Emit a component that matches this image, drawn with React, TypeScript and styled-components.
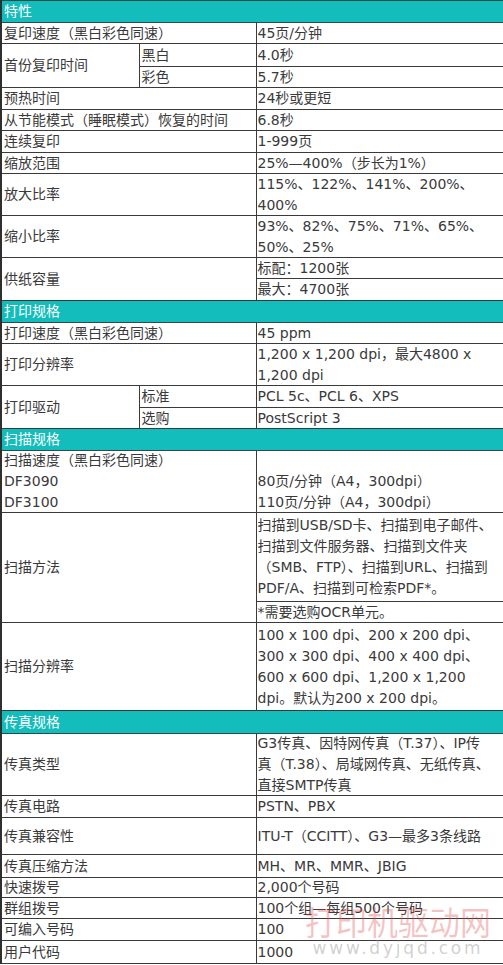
import React from 'react';
import styled, { createGlobalStyle } from 'styled-components';

const GlobalStyle = createGlobalStyle`
  html, body {
    margin: 0;
    padding: 0;
    background: #fff;
  }
  body {
    font-family: 'DejaVu Sans', 'Noto Sans CJK SC', sans-serif;
    font-size: 14px;
    color: #333;
  }
`;

type Sub = { sub?: string; value: string[]; h: number };
type Item = { label: string[]; rows: Sub[] };
type Section = { title: string; h: number; items: Item[] };

const specs: Section[] = [
  {
    title: '特性',
    h: 22,
    items: [
      { label: ['复印速度（黑白彩色同速）'], rows: [{ value: ['45页/分钟'], h: 21 }] },
      {
        label: ['首份复印时间'],
        rows: [
          { sub: '黑白', value: ['4.0秒'], h: 23 },
          { sub: '彩色', value: ['5.7秒'], h: 21 },
        ],
      },
      { label: ['预热时间'], rows: [{ value: ['24秒或更短'], h: 22 }] },
      { label: ['从节能模式（睡眠模式）恢复的时间'], rows: [{ value: ['6.8秒'], h: 21 }] },
      { label: ['连续复印'], rows: [{ value: ['1-999页'], h: 22 }] },
      { label: ['缩放范围'], rows: [{ value: ['25%—400%（步长为1%）'], h: 21 }] },
      { label: ['放大比率'], rows: [{ value: ['115%、122%、141%、200%、', '400%'], h: 42 }] },
      { label: ['缩小比率'], rows: [{ value: ['93%、82%、75%、71%、65%、', '50%、25%'], h: 42 }] },
      {
        label: ['供纸容量'],
        rows: [
          { value: ['标配：1200张'], h: 21 },
          { value: ['最大：4700张'], h: 22 },
        ],
      },
    ],
  },
  {
    title: '打印规格',
    h: 22,
    items: [
      { label: ['打印速度（黑白彩色同速）'], rows: [{ value: ['45 ppm'], h: 21 }] },
      { label: ['打印分辨率'], rows: [{ value: ['1,200 x 1,200 dpi，最大4800 x', '1,200 dpi'], h: 42 }] },
      {
        label: ['打印驱动'],
        rows: [
          { sub: '标准', value: ['PCL 5c、PCL 6、XPS'], h: 22 },
          { sub: '选购', value: ['PostScript 3'], h: 21 },
        ],
      },
    ],
  },
  {
    title: '扫描规格',
    h: 22,
    items: [
      {
        label: ['扫描速度（黑白彩色同速）', 'DF3090', 'DF3100'],
        rows: [{ value: ['\u00a0', '80页/分钟（A4，300dpi）', '110页/分钟（A4，300dpi）'], h: 62 }],
      },
      {
        label: ['扫描方法'],
        rows: [
          {
            value: [
              '扫描到USB/SD卡、扫描到电子邮件、',
              '扫描到文件服务器、扫描到文件夹',
              '（SMB、FTP）、扫描到URL、扫描到',
              'PDF/A、扫描到可检索PDF*。',
            ],
            h: 89,
          },
          { value: ['*需要选购OCR单元。'], h: 21 },
        ],
      },
      {
        label: ['扫描分辨率'],
        rows: [
          {
            value: [
              '100 x 100 dpi、200 x 200 dpi、',
              '300 x 300 dpi、400 x 400 dpi、',
              '600 x 600 dpi、1,200 x 1,200',
              'dpi。默认为200 x 200 dpi。',
            ],
            h: 88,
          },
        ],
      },
    ],
  },
  {
    title: '传真规格',
    h: 23,
    items: [
      {
        label: ['传真类型'],
        rows: [
          {
            value: ['G3传真、因特网传真（T.37）、IP传', '真（T.38）、局域网传真、无纸传真、', '直接SMTP传真'],
            h: 62,
          },
        ],
      },
      { label: ['传真电路'], rows: [{ value: ['PSTN、PBX'], h: 22 }] },
      { label: ['传真兼容性'], rows: [{ value: ['ITU-T（CCITT）、G3—最多3条线路'], h: 37 }] },
      { label: ['传真压缩方法'], rows: [{ value: ['MH、MR、MMR、JBIG'], h: 23 }] },
      { label: ['快速拨号'], rows: [{ value: ['2,000个号码'], h: 20 }] },
      { label: ['群组拨号'], rows: [{ value: ['100个组—每组500个号码'], h: 21 }] },
      { label: ['可编入号码'], rows: [{ value: ['100'], h: 22 }] },
      { label: ['用户代码'], rows: [{ value: ['1000'], h: 23 }] },
    ],
  },
];

const Page = styled.div`
  position: relative;
  width: 503px;
`;

const SpecTable = styled.table`
  width: 502px;
  table-layout: fixed;
  border-collapse: collapse;
  border-left: 2px solid #2f2f2f;
`;

const Row = styled.tr<{ $h: number }>`
  height: ${(p) => p.$h}px;
`;

const HeaderCell = styled.td`
  background: #13bdbb;
  color: #fff;
  border: 1px solid #2e4a4a;
  padding: 0 2px;
  line-height: 19px;
  vertical-align: middle;
`;

const Cell = styled.td<{ $value?: boolean }>`
  border: 1px solid #3a3a3a;
  padding: 0 ${(p) => (p.$value ? '1px' : '2px')};
  line-height: 19px;
  vertical-align: middle;
  white-space: nowrap;
  overflow: hidden;
  color: #3a3a3a;
`;

const Line = styled.div`
  white-space: nowrap;
  & + & {
    margin-top: 2px;
  }
`;

// watermark stamped over the last rows of the picture
const Watermark = styled.div`
  position: absolute;
  left: 304px;
  top: 902px;
  width: 188px;
  display: flex;
  flex-direction: column;
  align-items: center;
  pointer-events: none;
`;

const MarkTitle = styled.div`
  font-family: 'Noto Sans CJK SC', sans-serif;
  font-size: 31px;
  line-height: 38px;
  color: rgba(225, 80, 80, 0.34);
  transform: scaleY(1.08);
`;

const MarkUrl = styled.div`
  font-family: 'DejaVu Sans', sans-serif;
  font-size: 17px;
  line-height: 18px;
  margin-top: -1px;
  color: rgba(150, 150, 150, 0.45);
  letter-spacing: 2.8px;
`;

const Lines = ({ items }: { items: string[] }) => (
  <>
    {items.map((t, i) => (
      <Line key={i}>{t}</Line>
    ))}
  </>
);

const App = () => {
  return (
    <Page>
      <GlobalStyle />
      <SpecTable>
        <colgroup>
          <col style={{ width: 138 }} />
          <col style={{ width: 117 }} />
          <col style={{ width: 247 }} />
        </colgroup>
        <tbody>
          {specs.map((section) => (
            <React.Fragment key={section.title}>
              <Row $h={section.h}>
                <HeaderCell colSpan={3}>{section.title}</HeaderCell>
              </Row>
              {section.items.map((item) =>
                item.rows.map((r, i) => {
                  const hasSub = r.sub !== undefined;
                  return (
                    <Row $h={r.h} key={item.label[0] + i}>
                      {i === 0 && (
                        <Cell rowSpan={item.rows.length} colSpan={hasSub ? 1 : 2}>
                          <Lines items={item.label} />
                        </Cell>
                      )}
                      {hasSub && <Cell>{r.sub}</Cell>}
                      <Cell $value>
                        <Lines items={r.value} />
                      </Cell>
                    </Row>
                  );
                })
              )}
            </React.Fragment>
          ))}
        </tbody>
      </SpecTable>
      <Watermark>
        <MarkTitle>打印机驱动网</MarkTitle>
        <MarkUrl>www.dyjqd.com</MarkUrl>
      </Watermark>
    </Page>
  );
};

export default App;
